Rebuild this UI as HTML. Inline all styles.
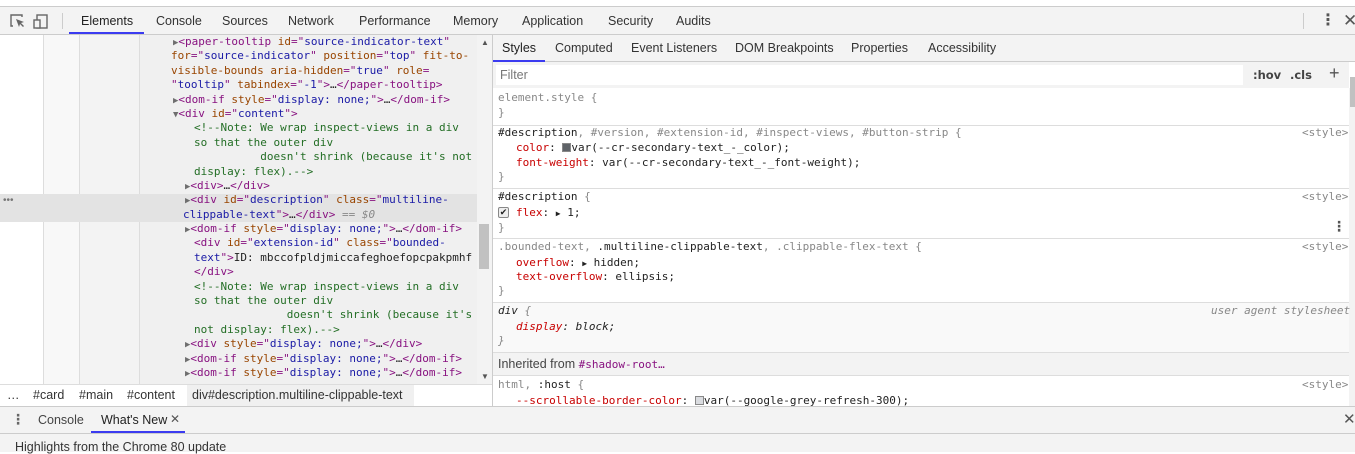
<!DOCTYPE html>
<html><head><meta charset="utf-8"><style>
*{margin:0;padding:0;box-sizing:border-box}
body{width:1355px;height:452px;overflow:hidden;background:#fff;font-family:"Liberation Sans","DejaVu Sans",sans-serif;font-size:12px;color:#333;position:relative}
.abs{position:absolute}
.m{font-family:"DejaVu Sans Mono","Liberation Mono",monospace;font-size:11px;white-space:pre;line-height:14.4px}
.tree{font-family:"DejaVu Sans Mono","Liberation Mono",monospace;font-size:11px;line-height:14.4px;white-space:normal;overflow:hidden}
.tree>div{white-space:pre;height:14.4px}
.tg{color:#881280}.an{color:#994500}.av{color:#1a1aa6}.cm{color:#236e25}.tx{color:#222}
.ar{color:#6e6e6e;font-size:9px}
.pn{color:#c80000}.gr{color:#888}
.tab{position:absolute;top:7px;height:28px;line-height:28px;font-size:12.5px;color:#333}
</style></head><body>
<div class="abs" style="left:0;top:0;width:1355px;height:7px;background:#fff;border-bottom:1px solid #ccc"></div>
<div class="abs" style="left:0;top:7px;width:1355px;height:28px;background:#f3f3f3;border-bottom:1px solid #ccc"></div>
<svg class="abs" style="left:8px;top:12px" width="44" height="18" viewBox="0 0 44 18">
<path d="M5 14H3V3h11v2" fill="none" stroke="#666" stroke-width="1.4"/>
<path d="M8 7l8 3-3 1 3 3-1 1-3-3-1 3z" fill="#666"/>
<rect x="29" y="3" width="10" height="13" fill="none" stroke="#666" stroke-width="1.4"/>
<rect x="26" y="8" width="6" height="8" fill="#f3f3f3" stroke="#666" stroke-width="1.4"/>
</svg>
<div class="abs" style="left:62px;top:13px;width:1px;height:16px;background:#ccc"></div>
<div class="tab" style="left:81px;color:#222">Elements</div>
<div class="abs" style="left:69px;top:32px;width:75px;height:2px;background:#3b3bf0"></div>
<div class="tab" style="left:156px">Console</div>
<div class="tab" style="left:222px">Sources</div>
<div class="tab" style="left:288px">Network</div>
<div class="tab" style="left:359px">Performance</div>
<div class="tab" style="left:453px">Memory</div>
<div class="tab" style="left:522px">Application</div>
<div class="tab" style="left:608px">Security</div>
<div class="tab" style="left:676px">Audits</div>
<div class="abs" style="left:1303px;top:13px;width:1px;height:16px;background:#ccc"></div>
<div class="abs" style="left:1320px;top:13px;font-size:16px;line-height:16px;color:#555;font-weight:bold">⋮</div>
<div class="abs" style="left:1343px;top:11px;font-size:17px;line-height:20px;color:#555">✕</div>

<div class="abs" style="left:43px;top:35px;width:36px;height:349px;background:#f8f8f8;border-left:1px solid #ddd"></div>
<div class="abs" style="left:79px;top:35px;width:60px;height:349px;background:#f3f3f3;border-left:1px solid #ddd"></div>
<div class="abs" style="left:139px;top:35px;width:338px;height:349px;background:#f0f0f0;border-left:1px solid #ddd"></div>
<div class="abs" style="left:0;top:194px;width:477px;height:28px;background:#e3e3e3"></div>
<div class="abs" style="left:3px;top:195px;font-size:10px;color:#777">•••</div>
<div class="abs" style="left:477px;top:35px;width:15px;height:349px;background:#f3f3f3"></div>
<div class="abs" style="left:479px;top:224px;width:10px;height:45px;background:#c1c1c1"></div>
<div class="abs" style="left:481px;top:38px;font-size:8px;color:#555">▲</div>
<div class="abs" style="left:481px;top:372px;font-size:8px;color:#555">▼</div>

<div class="abs tree" style="left:0;top:35px;width:477px;height:349px">
<div style="padding-left:173px"><span class="ar">▶</span><span class="tg">&lt;paper-tooltip </span><span class="an">id</span><span class="tg">="</span><span class="av">source-indicator-text</span><span class="tg">"</span></div>
<div style="padding-left:171px"><span class="an">for</span><span class="tg">="</span><span class="av">source-indicator</span><span class="tg">" </span><span class="an">position</span><span class="tg">="</span><span class="av">top</span><span class="tg">" </span><span class="an">fit-to-</span></div>
<div style="padding-left:171px"><span class="an">visible-bounds aria-hidden</span><span class="tg">="</span><span class="av">true</span><span class="tg">" </span><span class="an">role</span><span class="tg">=</span></div>
<div style="padding-left:171px"><span class="tg">"</span><span class="av">tooltip</span><span class="tg">" </span><span class="an">tabindex</span><span class="tg">="</span><span class="av">-1</span><span class="tg">"&gt;</span><span class="tx">…</span><span class="tg">&lt;/paper-tooltip&gt;</span></div>
<div style="padding-left:173px"><span class="ar">▶</span><span class="tg">&lt;dom-if </span><span class="an">style</span><span class="tg">="</span><span class="av">display: none;</span><span class="tg">"&gt;</span><span class="tx">…</span><span class="tg">&lt;/dom-if&gt;</span></div>
<div style="padding-left:173px"><span class="ar">▼</span><span class="tg">&lt;div </span><span class="an">id</span><span class="tg">="</span><span class="av">content</span><span class="tg">"&gt;</span></div>
<div style="padding-left:194px" class="cm">&lt;!--Note: We wrap inspect-views in a div</div>
<div style="padding-left:194px" class="cm">so that the outer div</div>
<div style="padding-left:194px" class="cm">          doesn't shrink (because it's not</div>
<div style="padding-left:194px" class="cm">display: flex).--&gt;</div>
<div style="padding-left:185px"><span class="ar">▶</span><span class="tg">&lt;div&gt;</span><span class="tx">…</span><span class="tg">&lt;/div&gt;</span></div>
<div style="padding-left:185px"><span class="ar">▶</span><span class="tg">&lt;div </span><span class="an">id</span><span class="tg">="</span><span class="av">description</span><span class="tg">" </span><span class="an">class</span><span class="tg">="</span><span class="av">multiline-</span></div>
<div style="padding-left:183px"><span class="av">clippable-text</span><span class="tg">"&gt;</span><span class="tx">…</span><span class="tg">&lt;/div&gt;</span><span class="gr" style="font-style:italic"> == $0</span></div>
<div style="padding-left:185px"><span class="ar">▶</span><span class="tg">&lt;dom-if </span><span class="an">style</span><span class="tg">="</span><span class="av">display: none;</span><span class="tg">"&gt;</span><span class="tx">…</span><span class="tg">&lt;/dom-if&gt;</span></div>
<div style="padding-left:194px"><span class="tg">&lt;div </span><span class="an">id</span><span class="tg">="</span><span class="av">extension-id</span><span class="tg">" </span><span class="an">class</span><span class="tg">="</span><span class="av">bounded-</span></div>
<div style="padding-left:194px"><span class="av">text</span><span class="tg">"&gt;</span><span class="tx">ID: mbccofpldjmiccafeghoefopcpakpmhf</span></div>
<div style="padding-left:194px"><span class="tg">&lt;/div&gt;</span></div>
<div style="padding-left:194px" class="cm">&lt;!--Note: We wrap inspect-views in a div</div>
<div style="padding-left:194px" class="cm">so that the outer div</div>
<div style="padding-left:194px" class="cm">              doesn't shrink (because it's</div>
<div style="padding-left:194px" class="cm">not display: flex).--&gt;</div>
<div style="padding-left:185px"><span class="ar">▶</span><span class="tg">&lt;div </span><span class="an">style</span><span class="tg">="</span><span class="av">display: none;</span><span class="tg">"&gt;</span><span class="tx">…</span><span class="tg">&lt;/div&gt;</span></div>
<div style="padding-left:185px"><span class="ar">▶</span><span class="tg">&lt;dom-if </span><span class="an">style</span><span class="tg">="</span><span class="av">display: none;</span><span class="tg">"&gt;</span><span class="tx">…</span><span class="tg">&lt;/dom-if&gt;</span></div>
<div style="padding-left:185px"><span class="ar">▶</span><span class="tg">&lt;dom-if </span><span class="an">style</span><span class="tg">="</span><span class="av">display: none;</span><span class="tg">"&gt;</span><span class="tx">…</span><span class="tg">&lt;/dom-if&gt;</span></div>
</div>

<div class="abs" style="left:0;top:384px;width:492px;height:22px;background:#fff;border-top:1px solid #ddd"></div>
<div class="abs" style="left:187px;top:385px;width:227px;height:21px;background:#f0f0f0"></div>
<div class="abs" style="left:7px;top:388px;font-size:12.5px;color:#333">…</div>
<div class="abs" style="left:33px;top:388px;font-size:12.5px;color:#333">#card</div>
<div class="abs" style="left:79px;top:388px;font-size:12.5px;color:#333">#main</div>
<div class="abs" style="left:127px;top:388px;font-size:12.5px;color:#333">#content</div>
<div class="abs" style="left:192px;top:388px;font-size:12.5px;color:#333">div#description.multiline-clippable-text</div>

<div class="abs" style="left:492px;top:35px;width:1px;height:372px;background:#ccc"></div>
<div class="abs" style="left:493px;top:35px;width:862px;height:27px;background:#f3f3f3;border-bottom:1px solid #ccc"></div>
<div class="abs" style="left:502px;top:41px;font-size:12.5px;color:#222">Styles</div>
<div class="abs" style="left:493px;top:60px;width:52px;height:2px;background:#3b3bf0"></div>
<div class="abs" style="left:555px;top:41px;font-size:12.5px">Computed</div>
<div class="abs" style="left:631px;top:41px;font-size:12.5px">Event Listeners</div>
<div class="abs" style="left:735px;top:41px;font-size:12.5px">DOM Breakpoints</div>
<div class="abs" style="left:851px;top:41px;font-size:12.5px">Properties</div>
<div class="abs" style="left:928px;top:41px;font-size:12.5px">Accessibility</div>
<div class="abs" style="left:493px;top:62px;width:856px;height:26px;background:#f3f3f3"></div>
<div class="abs" style="left:496px;top:65px;width:747px;height:20px;background:#fff"></div>
<div class="abs" style="left:500px;top:68px;font-size:12.5px;color:#777">Filter</div>
<div class="abs" style="left:1253px;top:68px;font-size:11.5px;font-weight:bold;color:#444;font-family:'DejaVu Sans',sans-serif">:hov</div>
<div class="abs" style="left:1290px;top:68px;font-size:11.5px;font-weight:bold;color:#444;font-family:'DejaVu Sans',sans-serif">.cls</div>
<div class="abs" style="left:1329px;top:63px;font-size:18px;color:#555">+</div>
<div class="abs" style="left:1349px;top:88px;width:6px;height:318px;background:#f3f3f3"></div>
<div class="abs" style="left:1350px;top:77px;width:5px;height:30px;background:#c1c1c1"></div>

<div class="abs" style="left:493px;top:125px;width:856px;height:1px;background:#ddd"></div>
<div class="abs" style="left:493px;top:188px;width:856px;height:1px;background:#ddd"></div>
<div class="abs" style="left:493px;top:238px;width:856px;height:1px;background:#ddd"></div>
<div class="abs" style="left:493px;top:302px;width:856px;height:50px;background:#f9f9f9;border-top:1px solid #ddd"></div>
<div class="abs" style="left:493px;top:352px;width:856px;height:24px;background:#f3f3f3;border-top:1px solid #ddd;border-bottom:1px solid #ddd"></div>

<div class="abs m" style="left:498px;top:91px;color:#888">element.style {</div>
<div class="abs m" style="left:498px;top:106px;color:#888">}</div>
<div class="abs m" style="left:498px;top:126px"><span class="tx">#description</span><span class="gr">, #version, #extension-id, #inspect-views, #button-strip {</span></div>
<div class="abs m" style="left:516px;top:141px"><span class="pn">color</span><span class="tx">: <span style="display:inline-block;width:9px;height:9px;background:#5f6368;border:1px solid #888;vertical-align:-1px"></span>var(--cr-secondary-text_-_color);</span></div>
<div class="abs m" style="left:516px;top:156px"><span class="pn">font-weight</span><span class="tx">: var(--cr-secondary-text_-_font-weight);</span></div>
<div class="abs m gr" style="left:498px;top:170px">}</div>
<div class="abs m" style="left:498px;top:190px"><span class="tx">#description</span><span class="gr"> {</span></div>
<div class="abs" style="left:498px;top:207px;width:11px;height:11px;border:1px solid #888;border-radius:2px;background:#eee;font-size:9px;line-height:9px;text-align:center;color:#222">✔</div>
<div class="abs m" style="left:516px;top:206px"><span class="pn">flex</span><span class="tx">: <span style="font-size:8px">▶</span> 1;</span></div>
<div class="abs m gr" style="left:498px;top:221px">}</div>
<div class="abs" style="left:1332px;top:218px;font-size:14px;font-weight:bold;color:#555">⋮</div>
<div class="abs m" style="left:498px;top:240px"><span class="gr">.bounded-text, </span><span class="tx">.multiline-clippable-text</span><span class="gr">, .clippable-flex-text {</span></div>
<div class="abs m" style="left:516px;top:256px"><span class="pn">overflow</span><span class="tx">: <span style="font-size:8px">▶</span> hidden;</span></div>
<div class="abs m" style="left:516px;top:270px"><span class="pn">text-overflow</span><span class="tx">: ellipsis;</span></div>
<div class="abs m gr" style="left:498px;top:284px">}</div>
<div class="abs m" style="left:498px;top:304px;font-style:italic"><span class="tx">div</span><span class="gr"> {</span></div>
<div class="abs m" style="left:516px;top:320px;font-style:italic"><span class="pn">display</span><span class="tx">: block;</span></div>
<div class="abs m gr" style="left:498px;top:334px;font-style:italic">}</div>
<div class="abs" style="left:498px;top:357px;font-size:12.5px;color:#444">Inherited from <span class="m tg" style="line-height:12px">#shadow-root…</span></div>
<div class="abs m" style="left:498px;top:378px"><span class="gr">html, </span><span class="tx">:host</span><span class="gr"> {</span></div>
<div class="abs m" style="left:516px;top:394px"><span class="pn">--scrollable-border-color</span><span class="tx">: <span style="display:inline-block;width:9px;height:9px;background:#dadce0;border:1px solid #888;vertical-align:-1px"></span>var(--google-grey-refresh-300);</span></div>

<div class="abs m gr" style="left:1302px;top:126px">&lt;style&gt;</div>
<div class="abs m gr" style="left:1302px;top:190px">&lt;style&gt;</div>
<div class="abs m gr" style="left:1302px;top:240px">&lt;style&gt;</div>
<div class="abs m gr" style="left:1211px;top:304px;font-style:italic">user agent stylesheet</div>
<div class="abs m gr" style="left:1302px;top:378px">&lt;style&gt;</div>

<div class="abs" style="left:0;top:406px;width:1355px;height:28px;background:#f3f3f3;border-top:1px solid #ccc;border-bottom:1px solid #ccc"></div>
<div class="abs" style="left:11px;top:411px;font-size:14px;font-weight:bold;color:#666">⋮</div>
<div class="abs" style="left:38px;top:413px;font-size:12.5px;color:#444">Console</div>
<div class="abs" style="left:101px;top:413px;font-size:12.5px;color:#222">What's New</div>
<div class="abs" style="left:170px;top:412px;font-size:12px;color:#555">✕</div>
<div class="abs" style="left:91px;top:431px;width:94px;height:2px;background:#3b3bf0"></div>
<div class="abs" style="left:1343px;top:410px;font-size:15px;color:#555">✕</div>
<div class="abs" style="left:0;top:434px;width:1355px;height:18px;background:#f3f3f3"></div>
<div class="abs" style="left:15px;top:440px;font-size:12.5px;color:#333">Highlights from the Chrome 80 update</div>
</body></html>
